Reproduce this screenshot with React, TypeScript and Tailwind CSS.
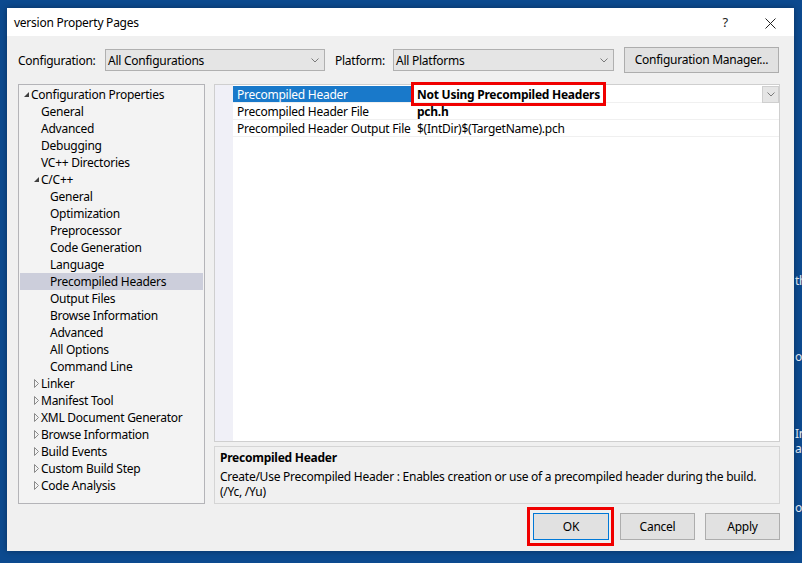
import React from "react";

const font = { fontFamily: '"Segoe UI", "Noto Sans", "Open Sans", sans-serif' };

type Node = { label: string; level: number; kind?: "open" | "closed"; selected?: boolean };

const tree: Node[] = [
  { label: "Configuration Properties", level: 0, kind: "open" },
  { label: "General", level: 1 },
  { label: "Advanced", level: 1 },
  { label: "Debugging", level: 1 },
  { label: "VC++ Directories", level: 1 },
  { label: "C/C++", level: 1, kind: "open" },
  { label: "General", level: 2 },
  { label: "Optimization", level: 2 },
  { label: "Preprocessor", level: 2 },
  { label: "Code Generation", level: 2 },
  { label: "Language", level: 2 },
  { label: "Precompiled Headers", level: 2, selected: true },
  { label: "Output Files", level: 2 },
  { label: "Browse Information", level: 2 },
  { label: "Advanced", level: 2 },
  { label: "All Options", level: 2 },
  { label: "Command Line", level: 2 },
  { label: "Linker", level: 1, kind: "closed" },
  { label: "Manifest Tool", level: 1, kind: "closed" },
  { label: "XML Document Generator", level: 1, kind: "closed" },
  { label: "Browse Information", level: 1, kind: "closed" },
  { label: "Build Events", level: 1, kind: "closed" },
  { label: "Custom Build Step", level: 1, kind: "closed" },
  { label: "Code Analysis", level: 1, kind: "closed" },
];

function Chevron() {
  return (
    <svg width="8" height="5" viewBox="0 0 8 5" className="shrink-0">
      <path d="M0.5 0.5 L4 4 L7.5 0.5" fill="none" stroke="#7a7a7a" strokeWidth="1" />
    </svg>
  );
}

function Combo({ value, width }: { value: string; width: string }) {
  return (
    <div className={`${width} flex h-[22px] items-center justify-between border border-[#b0b0b0] bg-[#e5e5e5] pl-[2px] pr-[5px]`}>
      <span className="pt-[1px]">{value}</span>
      <Chevron />
    </div>
  );
}

function Expander({ kind }: { kind?: "open" | "closed" }) {
  if (kind === "open")
    return (
      <svg width="9" height="9" viewBox="0 0 9 9" className="shrink-0">
        <path d="M7 2 L7 7 L2 7 Z" fill="#404040" />
      </svg>
    );
  return (
    <svg width="9" height="9" viewBox="0 0 9 9" className="shrink-0">
      <path d="M2.5 0.5 L6.5 4.5 L2.5 8.5 Z" fill="none" stroke="#8a8a8a" strokeWidth="1" />
    </svg>
  );
}

function TreeRow({ node }: { node: Node }) {
  const pad = node.level === 0 ? "pl-[2px]" : node.level === 1 ? (node.kind ? "pl-[12px]" : "pl-[21px]") : "pl-[30px]";
  return (
    <div className={`flex h-[17px] items-center ${pad} ${node.selected ? "bg-[#cccedb]" : ""}`}>
      {node.kind ? <Expander kind={node.kind} /> : null}
      <span className="whitespace-nowrap">{node.label}</span>
    </div>
  );
}

function Button({ label, focused }: { label: string; focused?: boolean }) {
  return (
    <div
      className={`flex h-[27px] items-center justify-center border bg-[#e1e1e1] pt-[1px] ${
        focused ? "w-[76px] border-[#0078d7]" : "w-[75px] border-[#adadad]"
      }`}
    >
      {label}
    </div>
  );
}

const props = [
  { name: "Precompiled Header", value: "Not Using Precompiled Headers", bold: true, selected: true },
  { name: "Precompiled Header File", value: "pch.h", bold: true },
  { name: "Precompiled Header Output File", value: "$(IntDir)$(TargetName).pch" },
];

export default function App() {
  return (
    <div
      className="relative h-[563px] w-[802px] overflow-hidden bg-[#0c4a8f] text-[12px] tracking-[-0.25px] text-black"
      style={font}
    >
      {/* bits of the window behind */}
      <div className="absolute left-[795px] top-[274px] flex flex-col text-[12px] leading-[14px] text-[#e6edf7]">
        <span>th</span>
        <span className="mt-[62px]">o</span>
        <span className="mt-[63px]">In</span>
        <span className="mt-[1px]">ac</span>
        <span className="mt-[45px]">oc</span>
      </div>

      <div className="relative ml-[7px] mt-[8px] flex h-[543px] w-[787px] flex-col bg-[#f0f0f0] shadow-[0_0_6px_rgba(0,0,0,0.35)]">
        {/* title bar */}
        <div className="flex h-[28px] items-center bg-white pl-[7px] pr-[18px] pt-[2px]">
          <span className="flex-1">version Property Pages</span>
          <span className="mr-[37px] text-[13px] text-[#222]">?</span>
          <svg width="11" height="11" viewBox="0 0 11 11">
            <path d="M0.5 0.5 L10.5 10.5 M10.5 0.5 L0.5 10.5" stroke="#222" strokeWidth="1" />
          </svg>
        </div>

        <div className="flex flex-1 flex-col pl-[11px] pr-[14px]">
          {/* configuration row */}
          <div className="mt-[11px] flex h-[26px] items-center">
            <span className="w-[87px] pt-[1px]">Configuration:</span>
            <Combo value="All Configurations" width="w-[220px]" />
            <span className="ml-[10px] w-[58px] pt-[1px]">Platform:</span>
            <Combo value="All Platforms" width="w-[221px]" />
            <div className="ml-[10px] flex h-[26px] w-[155px] items-center justify-center border border-[#adadad] bg-[#e1e1e1]">
              Configuration Manager...
            </div>
          </div>

          {/* main area */}
          <div className="mt-[11px] flex h-[420px] gap-[9px]">
            <div className="h-full w-[187px] border border-[#b4b4b8] bg-[#f3f3f3] px-[1px] pt-[1px]">
              {tree.map((n, i) => (
                <TreeRow key={i} node={n} />
              ))}
            </div>

            <div className="flex flex-1 flex-col gap-[4px]">
              <div className="flex h-[358px] border border-[#cfcfcf] bg-white">
                <div className="w-[18px] bg-[#f0f0f7]" />
                <div className="flex flex-1 flex-col pt-[1px]">
                  {props.map((p, i) => (
                    <div key={i} className="flex h-[17px] border-b border-[#f0f0f0]">
                      <div
                        className={`flex w-[179px] items-center whitespace-nowrap pl-[4px] pt-[2px] ${
                          p.selected ? "bg-[#1979ca] text-white" : ""
                        }`}
                      >
                        {p.name}
                      </div>
                      <div className="relative flex flex-1 items-center pl-[5px]">
                        <span className={`pt-[2px] ${p.bold ? "font-bold" : ""}`}>{p.value}</span>
                        {p.selected ? (
                          <>
                            <div className="absolute -top-[4px] left-[-1px] h-[24px] w-[195px] border-[3px] border-[#f00000]" />
                            <div className="ml-auto flex h-[17px] w-[17px] items-center justify-center border border-[#cfcfcf] bg-[#e5e5e5]">
                              <Chevron />
                            </div>
                          </>
                        ) : null}
                      </div>
                    </div>
                  ))}
                </div>
              </div>

              <div className="h-[58px] border border-[#d5d5d5] px-[5px] pt-[3px] leading-[15px]">
                <div className="font-bold">Precompiled Header</div>
                <div className="mt-[4px] whitespace-nowrap">
                  Create/Use Precompiled Header : Enables creation or use of a precompiled header during the build.
                </div>
                <div>(/Yc, /Yu)</div>
              </div>
            </div>
          </div>

          {/* buttons */}
          <div className="mt-[3px] flex items-center justify-end">
            <div className="border-[3px] border-[#f00000] p-[3px] pr-[2px]">
              <Button label="OK" focused />
            </div>
            <div className="ml-[6px]">
              <Button label="Cancel" />
            </div>
            <div className="ml-[10px]">
              <Button label="Apply" />
            </div>
          </div>
        </div>
      </div>
    </div>
  );
}
